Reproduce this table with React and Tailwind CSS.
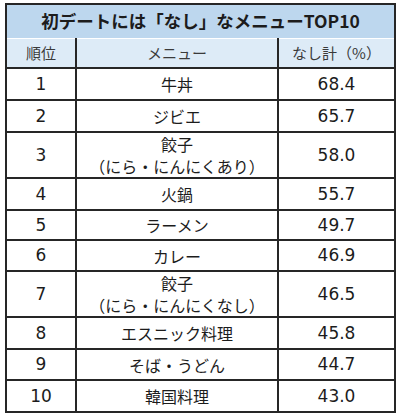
export default function App() {
  const rows = [
    { r: "1", m: ["牛丼"], v: "68.4", h: "h-[32px]" },
    { r: "2", m: ["ジビエ"], v: "65.7", h: "h-[32px]" },
    { r: "3", m: ["餃子", "（にら・にんにくあり）"], v: "58.0", h: "h-[44px]" },
    { r: "4", m: ["火鍋"], v: "55.7", h: "h-[32px]" },
    { r: "5", m: ["ラーメン"], v: "49.7", h: "h-[30px]" },
    { r: "6", m: ["カレー"], v: "46.9", h: "h-[31px]" },
    { r: "7", m: ["餃子", "（にら・にんにくなし）"], v: "46.5", h: "h-[45px]" },
    { r: "8", m: ["エスニック料理"], v: "45.8", h: "h-[32px]" },
    { r: "9", m: ["そば・うどん"], v: "44.7", h: "h-[31px]" },
    { r: "10", m: ["韓国料理"], v: "43.0", h: "h-[32px]" },
  ];
  const font = { fontFamily: '"DejaVu Sans", "Noto Sans CJK JP", sans-serif' };
  const jp = { fontFamily: '"Noto Sans CJK JP", sans-serif' };
  return (
    <div className="w-[400px] h-[414px] bg-white pt-[3px] pl-[5px]" style={font}>
      <table className="w-[391px] table-fixed border-collapse text-[#1c1c1c]">
        <colgroup>
          <col className="w-[70px]" />
          <col className="w-[202px]" />
          <col />
        </colgroup>
        <tbody>
          <tr className="h-[34px] bg-[#bdd7ee]">
            <td
              colSpan={3}
              className="border-2 border-[#262626] border-b border-b-white text-center text-[17.5px] font-bold"
              style={jp}
            >
              初デートには「なし」なメニューTOP10
            </td>
          </tr>
          <tr className="h-[30px] bg-[#ddebf7] text-[15px] text-[#3a3a3a]">
            <td className="border-2 border-t-0 border-[#262626] text-center" style={jp}>順位</td>
            <td className="border-2 border-t-0 border-[#262626] text-center" style={jp}>メニュー</td>
            <td className="border-2 border-t-0 border-[#262626] text-center" style={jp}>なし計（%）</td>
          </tr>
          {rows.map((row) => (
            <tr key={row.r} className={row.h}>
              <td className="border-2 border-[#262626] text-center text-[17px] leading-none">{row.r}</td>
              <td className="border-2 border-[#262626] text-center text-[16px] leading-[22px]" style={jp}>
                {row.m.map((t) => (
                  <div key={t}>{t}</div>
                ))}
              </td>
              <td className="border-2 border-[#262626] text-center text-[17px] leading-none">{row.v}</td>
            </tr>
          ))}
        </tbody>
      </table>
    </div>
  );
}
